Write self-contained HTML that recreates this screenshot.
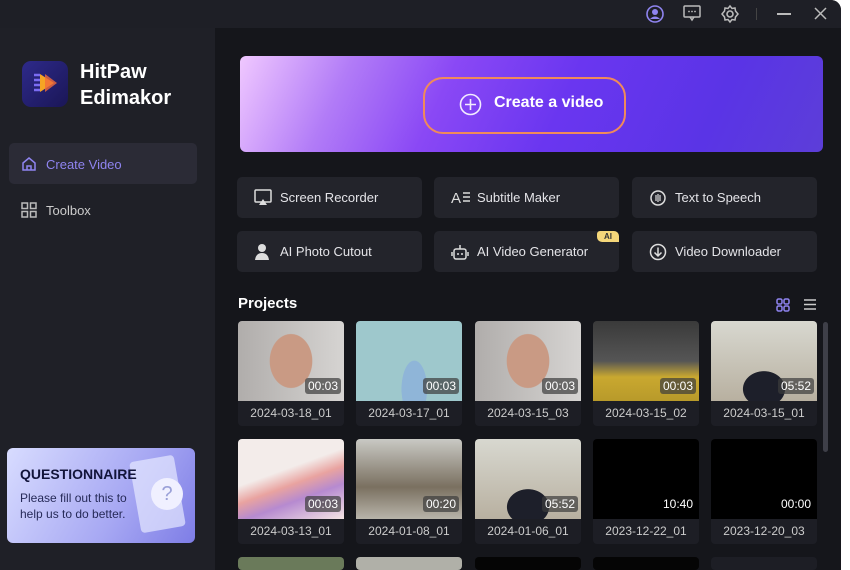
<!DOCTYPE html>
<html><head><style>
*{margin:0;padding:0;box-sizing:border-box}
html,body{width:850px;height:570px;overflow:hidden}
body{background:#fff;position:relative;font-family:"Liberation Sans",sans-serif;color:#ddd}
.win{position:absolute;left:0;top:0;width:841px;height:570px;background:#15161b;border-top-right-radius:10px;overflow:hidden}
.title{position:absolute;left:0;top:0;width:841px;height:28px;background:#1e1f26}
.side{position:absolute;left:0;top:28px;width:215px;height:542px;background:#1f2027}
.abs{position:absolute}
.tool{position:absolute;width:185px;height:41px;background:#23242b;border-radius:5px;font-size:13px;color:#e4e4e8;line-height:41px;padding-left:43px}
.tool svg{position:absolute;left:17px;top:12px}
.card{position:absolute;width:106px;height:105px;background:#1d1e25;border-radius:4px;overflow:hidden}
.thumb{position:absolute;left:0;top:0;width:106px;height:80px}
.dur{position:absolute;right:3px;top:57px;background:rgba(60,60,60,.7);color:#fff;font-size:12px;padding:1px 3px;border-radius:3px}
.lbl{position:absolute;top:80px;width:106px;text-align:center;font-size:12px;color:#ccc;line-height:25px}
</style></head><body>
<div class="win">
<div class="title"></div>
<svg class="abs" style="left:645px;top:4px" width="20" height="20" viewBox="0 0 20 20"><circle cx="10" cy="10" r="8" fill="none" stroke="#8f84f0" stroke-width="1.6"/><circle cx="10" cy="8" r="3" fill="#8f84f0"/><path d="M5 15q5-5 10 0" fill="#8f84f0"/></svg>
<svg class="abs" style="left:683px;top:5px" width="18" height="17" viewBox="0 0 18 17"><rect x="1" y="1" width="16" height="11" rx="1" fill="none" stroke="#bbb" stroke-width="1.5"/><path d="M7 12l2 3 2-3" fill="none" stroke="#bbb" stroke-width="1.5"/><circle cx="6" cy="6.5" r=".9" fill="#bbb"/><circle cx="9" cy="6.5" r=".9" fill="#bbb"/><circle cx="12" cy="6.5" r=".9" fill="#bbb"/></svg>
<svg class="abs" style="left:720px;top:4px" width="20" height="20" viewBox="0 0 20 20"><circle cx="10" cy="10" r="3" fill="none" stroke="#bbb" stroke-width="1.6"/><path d="M10 2l2 2.5 3-.5.5 3L18 10l-2.5 3-.5 3-3-.5L10 18l-2-2.5-3 .5-.5-3L2 10l2.5-3 .5-3 3 .5z" fill="none" stroke="#bbb" stroke-width="1.5"/></svg>
<div class="abs" style="left:756px;top:8px;width:1px;height:12px;background:#444"></div>
<div class="abs" style="left:777px;top:13px;width:14px;height:1.5px;background:#bbb"></div>
<svg class="abs" style="left:814px;top:7px" width="13" height="13"><path d="M1 1l11 11M12 1L1 12" stroke="#bbb" stroke-width="1.5"/></svg>

<div class="side"></div>
<div class="abs" style="left:22px;top:61px;width:46px;height:46px;border-radius:9px;background:linear-gradient(135deg,#2e2a8a,#1a1656)"></div>
<svg class="abs" style="left:30px;top:69px" width="30" height="30" viewBox="0 0 30 30"><path d="M4 6h6M4 11h6M4 16h6M4 21h6" stroke="#7b6cf2" stroke-width="2.5"/><path d="M10 5l14 9-14 9z" fill="#f5a524"/><path d="M15 5l12 9-12 9z" fill="#f36b3a" opacity=".8"/></svg>
<div class="abs" style="left:80px;top:59px;font-size:20px;font-weight:bold;color:#fff;line-height:26px">HitPaw<br>Edimakor</div>
<div class="abs" style="left:9px;top:143px;width:188px;height:41px;background:#2b2b36;border-radius:5px"></div>
<svg class="abs" style="left:21px;top:156px" width="16" height="16" viewBox="0 0 16 16"><path d="M2 7l6-5 6 5v7H2z" fill="none" stroke="#8f84f0" stroke-width="1.5"/><path d="M6 14v-4h4v4" fill="none" stroke="#8f84f0" stroke-width="1.5"/></svg>
<div class="abs" style="left:46px;top:157px;font-size:13px;color:#8f84f0">Create Video</div>
<svg class="abs" style="left:21px;top:202px" width="16" height="16" viewBox="0 0 16 16"><g fill="none" stroke="#bbb" stroke-width="1.5"><rect x="1" y="1" width="5.5" height="5.5"/><rect x="9.5" y="1" width="5.5" height="5.5"/><rect x="1" y="9.5" width="5.5" height="5.5"/><rect x="9.5" y="9.5" width="5.5" height="5.5"/></g></svg>
<div class="abs" style="left:46px;top:203px;font-size:13px;color:#ccc">Toolbox</div>

<div class="abs" style="left:7px;top:448px;width:188px;height:95px;border-radius:6px;background:linear-gradient(120deg,#d8dcff,#a7a8f3 60%,#7e7de6);overflow:hidden">
<div class="abs" style="left:128px;top:10px;width:45px;height:72px;background:rgba(230,232,255,.7);border-radius:4px;transform:rotate(-10deg)"></div>
<div class="abs" style="left:144px;top:30px;width:32px;height:32px;border-radius:50%;background:#f0f0ff;color:#9aa0d8;font-size:20px;text-align:center;line-height:32px">?</div>
<div class="abs" style="left:13px;top:18px;font-size:14px;font-weight:bold;color:#12143a">QUESTIONNAIRE</div>
<div class="abs" style="left:13px;top:42px;font-size:12px;color:#262a58;line-height:16px">Please fill out this to<br>help us to do better.</div>
</div>

<div class="abs" style="left:240px;top:56px;width:583px;height:96px;border-radius:6px;background:linear-gradient(115deg,#f0c8ff 0%,#b27cf7 18%,#8a48f5 35%,#6a36f0 55%,#5a34e6 80%,#5c3ed8 100%)"></div>
<div class="abs" style="left:423px;top:77px;width:203px;height:57px;border:2px solid #f08a5a;border-radius:20px"></div>
<svg class="abs" style="left:459px;top:93px" width="23" height="23"><circle cx="11.5" cy="11.5" r="10" fill="none" stroke="#f3ecff" stroke-width="1.6"/><path d="M11.5 6v11M6 11.5h11" stroke="#f3ecff" stroke-width="1.6"/></svg>
<div class="abs" style="left:494px;top:94px;font-size:16px;font-weight:bold;color:#fff">Create a video</div>

<div class="tool" style="left:237px;top:177px"><svg width="18" height="17"><rect x="1" y="1" width="16" height="12" rx="1" fill="none" stroke="#ddd" stroke-width="1.5"/><path d="M5 16l4-6 4 6z" fill="#ddd"/></svg>Screen Recorder</div>
<div class="tool" style="left:434px;top:177px"><svg width="20" height="16"><text x="0" y="14" font-size="15" fill="#ddd" font-family="Liberation Sans">A</text><path d="M12 4h7M12 8h7M12 12h7" stroke="#ddd" stroke-width="1.4"/></svg>Subtitle Maker</div>
<div class="tool" style="left:632px;top:177px"><svg width="18" height="18"><circle cx="9" cy="9" r="7" fill="none" stroke="#ddd" stroke-width="1.5"/><path d="M7 6v6M9 5v8M11 6v6" stroke="#ddd" stroke-width="1.2"/></svg>Text to Speech</div>
<div class="tool" style="left:237px;top:231px"><svg width="18" height="18"><circle cx="8" cy="5" r="4" fill="#ddd"/><path d="M1 17q1-7 7-7t7 7z" fill="#ddd"/></svg>AI Photo Cutout</div>
<div class="tool" style="left:434px;top:231px"><svg width="18" height="18"><rect x="3" y="6" width="12" height="10" rx="2" fill="none" stroke="#ddd" stroke-width="1.5"/><path d="M9 2v4M1 9v4M17 9v4" stroke="#ddd" stroke-width="1.5"/><circle cx="7" cy="11" r="1" fill="#ddd"/><circle cx="11" cy="11" r="1" fill="#ddd"/></svg>AI Video Generator</div>
<div class="abs" style="left:597px;top:231px;width:22px;height:11px;background:#f5d77a;border-radius:3px 5px 0 5px;font-size:8px;font-weight:bold;color:#333;text-align:center;line-height:11px">AI</div>
<div class="tool" style="left:632px;top:231px"><svg width="18" height="18"><circle cx="9" cy="9" r="7.5" fill="none" stroke="#ddd" stroke-width="1.5"/><path d="M9 4.5v8M5.5 9.5l3.5 3.5 3.5-3.5" fill="none" stroke="#ddd" stroke-width="1.5"/></svg>Video Downloader</div>

<div class="abs" style="left:238px;top:295px;font-size:15px;font-weight:bold;color:#fff">Projects</div>
<svg class="abs" style="left:776px;top:298px" width="14" height="14"><g fill="none" stroke="#8f84f0" stroke-width="1.5"><rect x="1" y="1" width="5" height="5" rx="1.5"/><rect x="8" y="1" width="5" height="5" rx="1.5"/><rect x="1" y="8" width="5" height="5" rx="1.5"/><rect x="8" y="8" width="5" height="5" rx="1.5"/></g></svg>
<svg class="abs" style="left:803px;top:298px" width="14" height="13"><path d="M1 2h12M1 6.5h12M1 11h12" stroke="#ccc" stroke-width="1.5"/></svg>
<div class="abs" style="left:823px;top:322px;width:5px;height:130px;background:#3e3f48;border-radius:3px"></div>

<div class="card" style="left:238px;top:321px"><div class="thumb" style="background:radial-gradient(ellipse 30px 38px at 50% 50%,#c99a84 70%,transparent 72%),linear-gradient(90deg,#b0adab,#d6d4d2)"></div><div class="dur">00:03</div><div class="lbl">2024-03-18_01</div></div>
<div class="card" style="left:356px;top:321px"><div class="thumb" style="background:radial-gradient(ellipse 18px 40px at 55% 85%,#8fb5d8 70%,transparent 72%),#9ec8cc"></div><div class="dur">00:03</div><div class="lbl">2024-03-17_01</div></div>
<div class="card" style="left:475px;top:321px"><div class="thumb" style="background:radial-gradient(ellipse 30px 38px at 50% 50%,#c99a84 70%,transparent 72%),linear-gradient(90deg,#b0adab,#d6d4d2)"></div><div class="dur">00:03</div><div class="lbl">2024-03-15_03</div></div>
<div class="card" style="left:593px;top:321px"><div class="thumb" style="background:linear-gradient(180deg,#3a3a3a 0,#555 50%,#c9a830 70%,#b89a2a 100%)"></div><div class="dur">00:03</div><div class="lbl">2024-03-15_02</div></div>
<div class="card" style="left:711px;top:321px"><div class="thumb" style="background:radial-gradient(ellipse 26px 22px at 50% 85%,#1d1f2a 80%,transparent 82%),linear-gradient(180deg,#d8d8d0,#b8b0a0)"></div><div class="dur">05:52</div><div class="lbl">2024-03-15_01</div></div>

<div class="card" style="left:238px;top:439px"><div class="thumb" style="background:linear-gradient(160deg,#f3ecea 40%,#e9a3a0 55%,#b68ad0 70%,#f5e6e4)"></div><div class="dur">00:03</div><div class="lbl">2024-03-13_01</div></div>
<div class="card" style="left:356px;top:439px"><div class="thumb" style="background:linear-gradient(180deg,#c9c9c4,#7a7060 60%,#b8b4aa)"></div><div class="dur">00:20</div><div class="lbl">2024-01-08_01</div></div>
<div class="card" style="left:475px;top:439px"><div class="thumb" style="background:radial-gradient(ellipse 26px 22px at 50% 85%,#1d1f2a 80%,transparent 82%),linear-gradient(180deg,#d8d8d0,#b8b0a0)"></div><div class="dur">05:52</div><div class="lbl">2024-01-06_01</div></div>
<div class="card" style="left:593px;top:439px"><div class="thumb" style="background:#000"></div><div class="dur" style="background:none">10:40</div><div class="lbl">2023-12-22_01</div></div>
<div class="card" style="left:711px;top:439px"><div class="thumb" style="background:#000"></div><div class="dur" style="background:none">00:00</div><div class="lbl">2023-12-20_03</div></div>

<div class="card" style="left:238px;top:557px;height:13px;background:#6a7a5a"></div>
<div class="card" style="left:356px;top:557px;height:13px;background:#b0b0a8"></div>
<div class="card" style="left:475px;top:557px;height:13px;background:#050505"></div>
<div class="card" style="left:593px;top:557px;height:13px;background:#050505"></div>
<div class="card" style="left:711px;top:557px;height:13px;background:#1d1e25"></div>
</div>
</body></html>
